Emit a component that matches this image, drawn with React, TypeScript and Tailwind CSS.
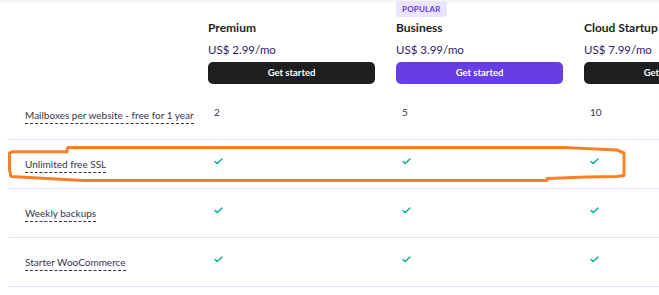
import { Fragment } from 'react'

interface Plan {
  name: string
  price: string
  popular?: boolean
}

interface Feature {
  label: string
  values: (string | boolean)[]
}

const plans: Plan[] = [
  { name: 'Premium', price: 'US$ 2.99/mo' },
  { name: 'Business', price: 'US$ 3.99/mo', popular: true },
  { name: 'Cloud Startup', price: 'US$ 7.99/mo' },
]

const features: Feature[] = [
  { label: 'Mailboxes per website - free for 1 year', values: ['2', '5', '10'] },
  { label: 'Unlimited free SSL', values: [true, true, true] },
  { label: 'Weekly backups', values: [true, true, true] },
  { label: 'Starter WooCommerce', values: [true, true, true] },
]

const cols = 'grid grid-cols-[199px_188px_188px_188px]'

function Check() {
  return (
    <svg width="9" height="7" viewBox="0 0 9 7" className="block">
      <polyline points="1,3.5 3.2,5.6 8,1" fill="none" stroke="#00b090" strokeWidth="1.4" strokeLinecap="round" strokeLinejoin="round" />
    </svg>
  )
}

export default function App() {
  return (
    <div
      className="relative w-[659px] h-[295px] overflow-hidden bg-white text-[#1d1e20] shadow-[inset_0_4px_4px_-3px_rgba(0,0,0,0.08)]"
      style={{ fontFamily: 'Lato, "Noto Sans", sans-serif' }}
    >
      <div className="pl-[9px] w-[800px]">
        {/* plan headers */}
        <div className={`${cols} h-[91px]`}>
          <div />
          {plans.map(p => (
            <div key={p.name} className="flex flex-col pt-px">
              <div className="flex h-[16px]">
                {p.popular && (
                  <div className="flex items-center h-[16px] px-[6px] rounded-[3px] bg-[#ebe4ff] text-[#673de6] text-[8px] leading-none font-bold tracking-[0.2px]">
                    POPULAR
                  </div>
                )}
              </div>
              <div className="mt-[3px] text-[12px] font-bold leading-[16px] text-[#1d1e20]">{p.name}</div>
              <div className="mt-[7px] text-[11.5px] leading-[14px] text-[#2f1c6a]">{p.price}</div>
              <button
                className={`mt-[5px] w-[167px] h-[22px] rounded-[5px] text-white text-[9.5px] font-bold ${
                  p.popular ? 'bg-[#673de6]' : 'bg-[#1d1e20]'
                }`}
              >
                Get started
              </button>
            </div>
          ))}
        </div>

        {/* feature rows */}
        {features.map(f => (
          <div key={f.label} className={`${cols} h-[49px] pb-[5px] border-b border-[#dae0fb] items-center`}>
            <div className="pl-[16px]">
              <span className="text-[10px] leading-[13px] text-[#36344d] border-b border-dashed border-[#36344d] pb-[2px]">
                {f.label}
              </span>
            </div>
            {f.values.map((v, i) => (
              <Fragment key={i}>
                <div className="pl-[6px] text-[10px] text-[#36344d]">
                  {v === true ? <div className="mt-0"><Check /></div> : v}
                </div>
              </Fragment>
            ))}
          </div>
        ))}
      </div>

      {/* hand-drawn highlight */}
      <svg className="absolute left-0 top-0 pointer-events-none" width="659" height="295">
        <polyline
          points="67,147.5 565,147.5 590,148.8 617,150 624,153 624,175.5 617,176.5 587,177 547,178.5 547,180.5 83,180.5 47,178.5 11,176.5 9.5,170 9.5,153 13,151.7 67,151.7 67,147.5"
          fill="none"
          stroke="#ff7f27"
          strokeWidth="3"
          strokeLinejoin="round"
        />
      </svg>
    </div>
  )
}
